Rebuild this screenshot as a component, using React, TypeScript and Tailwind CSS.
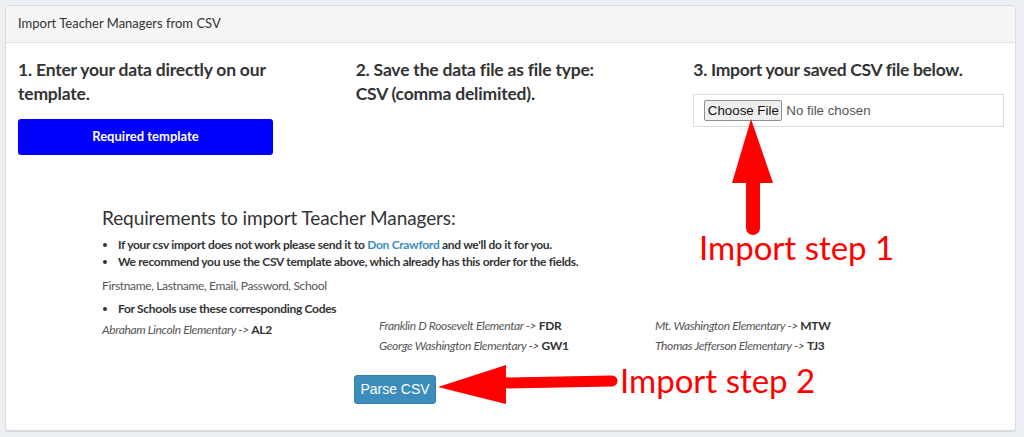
import { useState } from 'react';

const schools = [
    [{ name: 'Abraham Lincoln Elementary', code: 'AL2' }],
    [
        { name: 'Franklin D Roosevelt Elementar', code: 'FDR' },
        { name: 'George Washington Elementary', code: 'GW1' },
    ],
    [
        { name: 'Mt. Washington Elementary', code: 'MTW' },
        { name: 'Thomas Jefferson Elementary', code: 'TJ3' },
    ],
];

const FONT = "font-['Lato','Open_Sans',sans-serif]";

export default function App() {
    const [fileName, setFileName] = useState('');

    return (
        <div className={`relative h-[437px] w-full overflow-hidden bg-[#ecf0f5] p-[5px] text-[#333] ${FONT}`}>
            <div className="h-[426px] w-[1011px] rounded-[3px] border border-[#dcdcdc] bg-white shadow-[0_1px_1px_rgba(0,0,0,0.1)]">
                {/* header */}
                <div className="flex h-[37px] items-center border-b border-[#e3e3e3] bg-[#f5f5f5] px-[12px] text-[13px]">
                    Import Teacher Managers from CSV
                </div>

                <div className="px-[12px] pt-[15px]">
                    {/* steps */}
                    <div className="grid grid-cols-3 gap-x-7">
                        <div>
                            <h3 className="text-[17.5px] leading-[24px] font-bold tracking-[-0.2px]">1. Enter your data directly on our template.</h3>
                            <button className="mt-[13px] h-[36px] w-[255px] rounded-[3px] bg-[#0000ff] text-[13px] font-bold text-white">Required template</button>
                        </div>
                        <div>
                            <h3 className="text-[17.5px] leading-[24px] font-bold tracking-[-0.2px]">
                                2. Save the data file as file type:
                                <br />
                                CSV (comma delimited).
                            </h3>
                        </div>
                        <div>
                            <h3 className="text-[17.5px] leading-[24px] font-bold tracking-[-0.3px]">3. Import your saved CSV file below.</h3>
                            <label className="mt-[12px] flex h-[33px] w-[311px] items-center border border-[#ddd] pl-[10px] font-['Liberation_Sans',Arial,sans-serif] text-[13.3px]">
                                <span className="flex h-[21px] w-[78px] items-center justify-center rounded-[2px] border border-[#8f8f8f] bg-[#efefef] text-[#111]">
                                    Choose File
                                </span>
                                <span className="ml-[4px] text-[#555]">{fileName || 'No file chosen'}</span>
                                <input type="file" className="hidden" onChange={(e) => setFileName(e.target.files?.[0]?.name ?? '')} />
                            </label>
                        </div>
                    </div>

                    {/* requirements */}
                    <div className="mt-[52px] pl-[84px]">
                        <h4 className="text-[19px] leading-[22px] tracking-[-0.1px]">Requirements to import Teacher Managers:</h4>
                        <ul className="mt-[7px] list-disc pl-4 text-[12px] leading-[17px] font-bold tracking-[-0.3px]">
                            <li>
                                If your csv import does not work please send it to <a className="text-[#3c8dbc]">Don Crawford</a> and we'll do it for you.
                            </li>
                            <li>We recommend you use the CSV template above, which already has this order for the fields.</li>
                        </ul>
                        <p className="mt-[7px] text-[12px] leading-[17px] tracking-[-0.35px] text-[#555]">Firstname, Lastname, Email, Password, School</p>
                        <ul className="mt-[6px] list-disc pl-4 text-[12px] leading-[17px] font-bold tracking-[-0.3px]">
                            <li>For Schools use these corresponding Codes</li>
                        </ul>
                        <div className="grid grid-cols-[277px_276px_1fr] text-[12px] leading-[17px] tracking-[-0.35px]">
                            {schools.map((col, i) => (
                                <div key={i} className={`flex flex-col gap-[3px] ${i === 0 ? 'pt-[4px]' : ''}`}>
                                    {col.map((s) => (
                                        <div key={s.code}>
                                            <i className="text-[#555]">{s.name} -&gt; </i>
                                            <b>{s.code}</b>
                                        </div>
                                    ))}
                                </div>
                            ))}
                        </div>
                    </div>

                    <button className="mt-[21px] ml-[336px] h-[29px] w-[82px] rounded-[3px] border border-[#367fa9] bg-[#3c8dbc] font-['Liberation_Sans',Arial,sans-serif] text-[14px] text-white">
                        Parse CSV
                    </button>
                </div>
            </div>

            {/* annotations drawn over the screenshot */}
            <svg className="pointer-events-none absolute inset-0" width="1024" height="437" viewBox="0 0 1024 437">
                <polygon points="751,119 732,183 773,183" fill="#ff0000" />
                <line x1="753" y1="180" x2="753" y2="228" stroke="#ff0000" strokeWidth="14" strokeLinecap="round" />
                <polygon points="438,387 506,365 506,404" fill="#ff0000" />
                <line x1="503" y1="383" x2="612" y2="381" stroke="#ff0000" strokeWidth="11" strokeLinecap="round" />
            </svg>
            <div className="pointer-events-none absolute top-[227px] left-[699px] text-[33px] leading-[40px] text-[#ff0000]">Import step 1</div>
            <div className="pointer-events-none absolute top-[360px] left-[620px] text-[33px] leading-[40px] text-[#ff0000]">Import step 2</div>
        </div>
    );
}
